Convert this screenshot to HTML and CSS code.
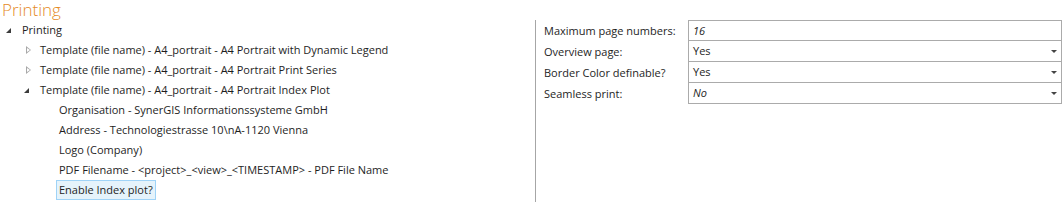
FILE: index.html
```html
<!DOCTYPE html>
<html>
<head>
  <title>Printing</title>
  <link rel="stylesheet" href="styles.css">
</head>
<body>
  <h1 class="title">Printing</h1>
  <div class="layout">
    <div class="tree">
      <div class="node lvl0"><span class="arrow open"></span>Printing</div>
      <div class="node lvl1"><span class="arrow closed"></span>Template (file name) - A4_portrait - A4 Portrait with Dynamic Legend</div>
      <div class="node lvl1"><span class="arrow closed"></span>Template (file name) - A4_portrait - A4 Portrait Print Series</div>
      <div class="node lvl1"><span class="arrow open"></span>Template (file name) - A4_portrait - A4 Portrait Index Plot</div>
      <div class="node lvl2">Organisation - SynerGIS Informationssysteme GmbH</div>
      <div class="node lvl2">Address - Technologiestrasse 10\nA-1120 Vienna</div>
      <div class="node lvl2">Logo (Company)</div>
      <div class="node lvl2">PDF Filename - &lt;project&gt;_&lt;view&gt;_&lt;TIMESTAMP&gt; - PDF File Name</div>
      <div class="node lvl2"><span class="selected">Enable Index plot?</span></div>
    </div>
    <div class="props">
      <div class="label">Maximum page numbers:</div>
      <div class="value italic">16</div>
      <div class="label">Overview page:</div>
      <div class="value">Yes<span class="drop"></span></div>
      <div class="label">Border Color definable?</div>
      <div class="value">Yes<span class="drop"></span></div>
      <div class="label">Seamless print:</div>
      <div class="value italic">No<span class="drop"></span></div>
    </div>
  </div>
</body>
</html>
```
FILE: styles.css
```css
body {
  margin: 0;
  font-family: "Open Sans", "Noto Sans", sans-serif;
  font-size: 11px;
  color: #1e1e1e;
  background: #fff;
  width: 1064px;
  height: 202px;
  overflow: hidden;
}

.title {
  margin: 0;
  padding-left: 2px;
  height: 20px;
  line-height: 20px;
  font-size: 17px;
  font-weight: 300;
  color: #e58a1f;
}

.layout {
  display: flex;
}

.tree {
  width: 535px;
  height: 182px;
  border-right: 1px solid #a6a6a6;
}

.node {
  height: 20px;
  line-height: 20px;
  display: flex;
  align-items: center;
  white-space: nowrap;
}

.lvl0 { padding-left: 5px; }
.lvl1 { padding-left: 23px; }
.lvl2 { padding-left: 59px; }

.arrow {
  display: inline-block;
  position: relative;
}

.arrow.closed {
  width: 0;
  height: 0;
  border-top: 4px solid transparent;
  border-bottom: 4px solid transparent;
  border-left: 5px solid #a8a8a8;
  margin-right: 9px;
  margin-left: 3px;
}

.arrow.closed::after {
  content: "";
  position: absolute;
  left: -4px;
  top: -2px;
  border-top: 2px solid transparent;
  border-bottom: 2px solid transparent;
  border-left: 3px solid #fff;
}

.arrow.open {
  width: 0;
  height: 0;
  border-left: 5px solid transparent;
  border-bottom: 5px solid #3c3c3c;
  margin-left: 1px;
  margin-right: 11px;
}

.selected {
  display: inline-block;
  height: 18px;
  line-height: 18px;
  padding: 0 2px;
  margin-left: -3px;
  background: #e5f3fb;
  border: 1px solid #9fd3f7;
}

.props {
  flex: 1;
  display: grid;
  grid-template-columns: 144px 374px;
  grid-auto-rows: 21px;
  align-content: start;
  padding-left: 8px;
}

.label {
  line-height: 21px;
  white-space: nowrap;
}

.value {
  position: relative;
  border: 1px solid #ababab;
  border-top: none;
  line-height: 20px;
  padding-left: 4px;
}

.value:nth-child(2) {
  border-top: 1px solid #ababab;
  line-height: 19px;
}

.italic {
  font-style: italic;
}

.drop {
  position: absolute;
  right: 4px;
  top: 9px;
  border-left: 3px solid transparent;
  border-right: 3px solid transparent;
  border-top: 3px solid #444;
}
```
